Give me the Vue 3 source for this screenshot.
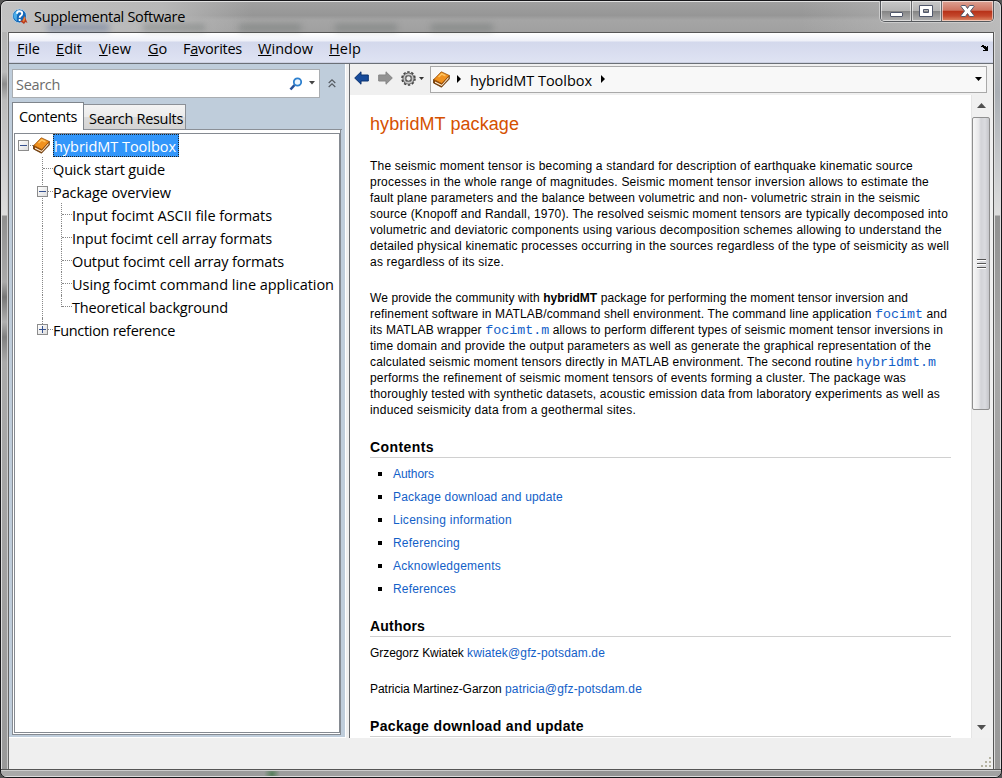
<script setup>
const menus = [
  { pre: '', key: 'F', post: 'ile', w: 23, gap: 16 },
  { pre: '', key: 'E', post: 'dit', w: 26, gap: 17 },
  { pre: '', key: 'V', post: 'iew', w: 32, gap: 17 },
  { pre: '', key: 'G', post: 'o', w: 19, gap: 16 },
  { pre: 'F', key: 'a', post: 'vorites', w: 59, gap: 16 },
  { pre: '', key: 'W', post: 'indow', w: 55, gap: 16 },
  { pre: '', key: 'H', post: 'elp', w: 32, gap: 0 },
]
const topics = [
  { text: 'Quick start guide', level: 1, w: 112 },
  { text: 'Package overview', level: 1, box: 'minus', w: 118 },
  { text: 'Input focimt ASCII file formats', level: 2, w: 200 },
  { text: 'Input focimt cell array formats', level: 2, w: 200 },
  { text: 'Output focimt cell array formats', level: 2, w: 212 },
  { text: 'Using focimt command line application', level: 2, w: 262 },
  { text: 'Theoretical background', level: 2, w: 156, end: true },
  { text: 'Function reference', level: 1, box: 'plus', w: 122, end: true },
]
const intro = [
  [543, 'The seismic moment tensor is becoming a standard for description of earthquake kinematic source'],
  [559, 'processes in the whole range of magnitudes. Seismic moment tensor inversion allows to estimate the'],
  [550, 'fault plane parameters and the balance between volumetric and non- volumetric strain in the seismic'],
  [578, 'source (Knopoff and Randall, 1970). The resolved seismic moment tensors are typically decomposed into'],
  [572, 'volumetric and deviatoric components using various decomposition schemes allowing to understand the'],
  [579, 'detailed physical kinematic processes occurring in the sources regardless of the type of seismicity as well'],
  [134, 'as regardless of its size.'],
]
const summary = [
  [539, [['', 'We provide the community with '], ['b', 'hybridMT'], ['', ' package for performing the moment tensor inversion and']]],
  [577, [['', 'refinement software in MATLAB/command shell environment. The command line application '], ['code', 'focimt'], ['', ' and']]],
  [573, [['', 'its MATLAB wrapper '], ['code', 'focimt.m'], ['', ' allows to perform different types of seismic moment tensor inversions in']]],
  [561, [['', 'time domain and provide the output parameters as well as generate the graphical representation of the']]],
  [566, [['', 'calculated seismic moment tensors directly in MATLAB environment. The second routine '], ['code', 'hybridmt.m']]],
  [536, [['', 'performs the refinement of seismic moment tensors of events forming a cluster. The package was']]],
  [570, [['', 'thoroughly tested with synthetic datasets, acoustic emission data from laboratory experiments as well as']]],
  [266, [['', 'induced seismicity data from a geothermal sites.']]],
]
const links = [
  ['Authors', 41], ['Package download and update', 170], ['Licensing information', 119],
  ['Referencing', 67], ['Acknowledgements', 108], ['References', 63],
]
// Spreads letters so that a line occupies the given width
const vFit = {
  mounted(el, { value }) {
    let n = el.textContent.length
    el.querySelectorAll('.code').forEach((c) => { n -= c.textContent.length })
    el.style.letterSpacing = (value - el.getBoundingClientRect().width) / n + 'px'
  },
}
</script>

<template>
  <div class="window">
    <header class="titlebar">
      <svg class="appicon" width="18" height="18" viewBox="0 0 18 18">
        <circle cx="7.500" cy="8" r="7" fill="#1468b8" stroke="#b8cfe0" />
        <path d="M1.500 7Q3 2 8 2Q4 6 5 13Q1.500 11 1.500 7" fill="#4caee9" />
        <path d="M5 5.700Q5 3.300 7.500 3.300Q10.200 3.300 10.200 5.600Q10.200 7.100 8.700 7.800Q7.700 8.300 7.700 9.700M7.700 11V13" fill="none" stroke="#fff" stroke-width="1.900" />
        <path d="M8 13.500L10.500 12L12.500 8L15.500 15L13.500 14L12 16L10 14.500Z" fill="#b83a1d" />
        <path d="M12.500 8L13.200 11L12 14L10.500 13Z" fill="#e8853b" />
      </svg>
      <span class="caption" v-fit="151">Supplemental Software</span>
      <div class="ghosts"><i></i><i></i><i></i><i></i><i></i></div>
      <div class="buttons">
        <span class="btn min"><svg width="30" height="20"><rect x="9.5" y="11.5" width="12" height="4" rx=".5" fill="#fff" stroke="#50576b" /></svg></span>
        <span class="btn max"><svg width="29" height="20"><path d="M7.500 4.500h13v11h-13zM11.500 8.500v3h5v-3z" fill="#fff" fill-rule="evenodd" stroke="#50576b" /></svg></span>
        <span class="btn close"><svg width="51" height="20"><path d="M19.500 4.500h4l2 3l2-3h4l.5 1l-3.500 4.500l3.500 4.500l-.5 1h-4l-2-3l-2 3h-4l-.5-1l3.500-4.500l-3.500-4.500z" fill="#fff" stroke="#50576b" /></svg></span>
      </div>
    </header>
    <div class="body">
      <div class="edge left"></div>
      <div class="client">
        <nav class="menubar">
          <span v-for="m in menus" :key="m.key" class="menu" :style="{ width: m.w + m.gap + 'px' }"><span class="ib" v-fit="m.w">{{ m.pre }}<u>{{ m.key }}</u>{{ m.post }}</span></span>
          <svg class="dock" width="8" height="7" viewBox="0 0 8 7" shape-rendering="crispEdges"><path d="M1 0h2v1h2v1h1v-1h1v5h-5v-1h2v-1h-1v-1h-1v-1h-2v-1h1z" fill="#000" /></svg>
        </nav>
        <div class="main">
          <aside class="side">
            <div class="searchrow">
              <div class="search">
                <span class="ib" v-fit="44">Search</span>
                <svg class="lens" width="14" height="14" viewBox="0 0 14 14"><path d="M1.500 12.500L5.500 8" stroke="#254f98" stroke-width="2.600" /><circle cx="8.500" cy="5" r="3.700" fill="#eef7ff" stroke="#2d80cf" stroke-width="1.800" /></svg>
                <svg class="caret" width="6" height="4" viewBox="0 0 6 4"><path d="M0 0H6L3 3.500Z" fill="#444" /></svg>
              </div>
              <svg class="chev" width="8" height="9" viewBox="0 0 8 9"><path d="M.7 4L4 .9L7.300 4M.7 8L4 4.900L7.300 8" fill="none" stroke="#555b62" stroke-width="1.200" /></svg>
            </div>
            <div class="tabs">
              <div class="tab on"><span class="ib" v-fit="58">Contents</span></div>
              <div class="tab off"><span class="ib" v-fit="94">Search Results</span></div>
              <div class="tabfill"></div>
            </div>
            <div class="panel">
              <div class="tree">
                <div class="row root">
                  <span class="box"></span><span class="dash"></span>
                  <svg class="book" width="17" height="17" viewBox="0 0 17 17"><path d="M.5 8.500V12L8.500 16.200L16.300 8V4.500Z" fill="#8a4507" stroke="#5e3409" stroke-width=".8" /><path d="M2 10.500L8.700 13.800L15.500 6V7.500L8.700 15L2 11.700Z" fill="#fff0d9" /><path d="M.8 8.500L8.300 .8L16.300 4.500L8.800 12.600Z" fill="#f0911f" stroke="#985008" stroke-width=".8" /><path d="M5.500 6L8.800 3L12.500 4.700" fill="none" stroke="#ffc35e" stroke-width="1.500" /></svg>
                  <span class="sel"><span class="ib" v-fit="122">hybridMT Toolbox</span></span>
                </div>
                <div v-for="t in topics" :key="t.text" class="row" :class="['lv' + t.level, { end: t.end }]">
                  <span class="guide"></span><span v-if="t.level === 2" class="guide two"></span>
                  <span v-if="t.box" class="box" :class="t.box"></span>
                  <span class="dash"></span>
                  <span class="ib label" v-fit="t.w">{{ t.text }}</span>
                </div>
              </div>
            </div>
          </aside>
          <section class="viewer">
            <div class="toolbar">
              <svg class="nav" width="15" height="14" viewBox="0 0 15 14"><path d="M.7 7L7 .8V4H14.300V10H7V13.200Z" fill="#174b9b" stroke="#0b3270" /></svg>
              <svg class="nav fwd" width="15" height="14" viewBox="0 0 15 14"><path d="M14.300 7L8 .8V4H.7V10H8V13.200Z" fill="#929292" stroke="#858585" /></svg>
              <svg class="nav gear" width="15" height="15" viewBox="0 0 15 15"><circle cx="7.500" cy="7.500" r="6.500" fill="none" stroke="#444" stroke-width="1.600" stroke-dasharray="2.400 1.684" /><circle cx="7.500" cy="7.500" r="4.600" fill="none" stroke="#4d4d4d" stroke-width="2.800" /><circle cx="7.500" cy="7.500" r="4.400" fill="none" stroke="#c8c8c8" stroke-width="1.600" /><circle cx="7.500" cy="7.500" r="2.700" fill="#eee" stroke="#555" stroke-width="1.100" /></svg>
              <svg class="nav tiny" width="5" height="3" viewBox="0 0 5 3"><path d="M0 0H5L2.500 3Z" fill="#333" /></svg>
              <div class="address">
                <svg class="book" width="17" height="17" viewBox="0 0 17 17"><path d="M.5 8.500V12L8.500 16.200L16.300 8V4.500Z" fill="#8a4507" stroke="#5e3409" stroke-width=".8" /><path d="M2 10.500L8.700 13.800L15.500 6V7.500L8.700 15L2 11.700Z" fill="#fff0d9" /><path d="M.8 8.500L8.300 .8L16.300 4.500L8.800 12.600Z" fill="#f0911f" stroke="#985008" stroke-width=".8" /><path d="M5.500 6L8.800 3L12.500 4.700" fill="none" stroke="#ffc35e" stroke-width="1.500" /></svg>
                <svg class="a1" width="4" height="8" viewBox="0 0 4 8"><path d="M0 0L4 4L0 8Z" /></svg>
                <span class="ib" v-fit="122">hybridMT Toolbox</span>
                <svg class="a2" width="4" height="8" viewBox="0 0 4 8"><path d="M0 0L4 4L0 8Z" /></svg>
                <svg class="drop" width="7" height="4" viewBox="0 0 7 4"><path d="M0 0H7L3.500 4Z" /></svg>
              </div>
            </div>
            <div class="docrow">
              <article class="doc">
                <h1><span class="ib" v-fit="149">hybridMT package</span></h1>
                <p><span v-for="l in intro" :key="l[1]" class="line"><span class="ib" v-fit="l[0]">{{ l[1] }}</span></span></p>
                <p><span v-for="(l, i) in summary" :key="i" class="line"><span class="ib" v-fit="l[0]"><span v-for="(s, j) in l[1]" :key="j" :class="s[0]">{{ s[1] }}</span></span></span></p>
                <h2><span class="ib" v-fit="64">Contents</span></h2>
                <ul><li v-for="l in links" :key="l[0]"><a class="ib" v-fit="l[1]">{{ l[0] }}</a></li></ul>
                <h2 class="after"><span class="ib" v-fit="55">Authors</span></h2>
                <p class="mail"><span class="ib" v-fit="97">Grzegorz Kwiatek </span><a class="ib" v-fit="138">kwiatek@gfz-potsdam.de</a></p>
                <p><span class="ib" v-fit="135">Patricia Martinez-Garzon </span><a class="ib" v-fit="137">patricia@gfz-potsdam.de</a></p>
                <h2><span class="ib" v-fit="214">Package download and update</span></h2>
              </article>
              <div class="scroll">
                <svg class="up" width="9" height="5" viewBox="0 0 9 5"><path d="M0 5L4.500 0L9 5Z" fill="#505050" /></svg>
                <div class="thumb"><i></i><i></i><i></i></div>
                <svg class="down" width="9" height="5" viewBox="0 0 9 5"><path d="M0 0H9L4.500 5Z" fill="#505050" /></svg>
              </div>
            </div>
          </section>
        </div>
        <footer class="status">
          <svg width="10" height="10" viewBox="0 0 10 10" fill="#b5b3a2"><path d="M8 0h2v2h-2zM4 4h2v2h-2zM8 4h2v2h-2zM0 8h2v2h-2zM4 8h2v2h-2zM8 8h2v2h-2z" /></svg>
        </footer>
      </div>
      <div class="edge right"></div>
    </div>
    <div class="bottom"></div>
  </div>
</template>

<style>
html, body { margin: 0; overflow: hidden; background: #555; }
</style>

<style scoped>
* { box-sizing: border-box; }
svg { display: block; flex: none; }
.window { width: 1002px; height: 778px; display: flex; flex-direction: column; font: 14.5px/20px "Open Sans", "Noto Sans", sans-serif; color: #000; background: #a5a5a5; border: 1px solid #17171a; border-radius: 7px; overflow: hidden; box-shadow: inset 0 0 0 1px #d5d5d5; }
.ib { display: inline-block; white-space: pre; flex: none; }
.titlebar { height: 31px; flex: none; display: flex; align-items: flex-start; position: relative; border-top: 1px solid #e2e2e2; border-left: 1px solid #d8d8d8; border-right: 1px solid #d8d8d8; border-radius: 6px 6px 0 0; background: linear-gradient(90deg, rgba(196,196,196,.95) 0, rgba(186,186,186,.9) 160px, rgba(150,150,150,0) 250px), linear-gradient(90deg, transparent 80%, rgba(195,195,195,.75) 100%), linear-gradient(#a0a0a0, #969696 45%, #a5a5a5 60%, #a0a0a0); }
.appicon { margin: 6px 0 0 10px; }
.caption { margin: 5px 0 0 4px; white-space: pre; position: relative; z-index: 1; }
.ghosts { position: absolute; left: 45px; top: 22px; display: flex; gap: 34px; filter: blur(3px); }
.ghosts i { width: 62px; height: 7px; background: rgba(85,92,90,.32); }
.ghosts i:first-child { background: rgba(65,90,140,.4); }
.buttons { position: absolute; right: 6px; top: -1px; display: flex; height: 21px; border: 1px solid #55585c; border-top: 0; border-radius: 0 0 5px 5px; overflow: hidden; box-shadow: 0 0 0 1px #ccc; }
.btn { height: 20px; box-shadow: inset 0 0 0 1px rgba(255,255,255,.55); background: linear-gradient(#c8c8c8, #b4b4b4 48%, #858585 52%, #b1b1b1); }
.min { width: 31px; border-right: 1px solid #65676a; }
.max { width: 30px; border-right: 1px solid #65676a; }
.close { width: 51px; background: linear-gradient(#dda294, #ce7461 46%, #b83219 52%, #c4472c 75%, #de8c69); }
.body { flex: 1; display: flex; min-height: 0; }
.edge { flex: none; }
.left { width: 8px; border-left: 1px solid #ddd; border-right: 1px solid #666; background: linear-gradient(#b5b5b5 0, #bbb 40px, #8d8d8d 52px, #bbb 68px, #ddd 183px, #8f8f8f 184px, #aaa 250px, #777 265px, #b0b0b0 290px, #808080 305px, #aaa 330px, #999); box-shadow: inset -1px 0 #ccc; }
.right { width: 8px; border-left: 1px solid #555; border-right: 1px solid #ddd; background: linear-gradient(#b9b9b9 0, #aaafb5 60px, #ddd 183px, #929292 184px, #a8a8a8 320px, #999); box-shadow: inset 1px 0 #ddd; }
.client { flex: 1; min-width: 0; display: flex; flex-direction: column; background: #f0f0f0; border-top: 1px solid #555; }
.menubar { height: 31px; flex: none; display: flex; align-items: flex-start; padding: 6px 4px 0 8px; border-bottom: 1px solid #6b7077; background: linear-gradient(#fff 0, #eef0f8 8px, #d3d8ec 9px, #dfe3f3 29px, #b8bdd0 30px); }
.menu { flex: none; }
.menu u { text-underline-offset: 1px; text-decoration-thickness: 1px; }
.dock { margin: 6px 0 0 auto; }
.main { height: 674px; flex: none; display: flex; }
.side { width: 337px; flex: none; background: #bfcddb; border-right: 1px solid #fff; border-bottom: 1px solid #fff; padding: 5px 3px 0; }
.searchrow { display: flex; align-items: center; height: 29px; }
.search { width: 308px; height: 29px; background: #fff; border: 1px solid #a9adb1; display: flex; align-items: center; padding: 1px 4px 0 3px; color: #6c6c6c; }
.search .ib { padding-top: 2px; }
.lens { margin: 0 6px 0 auto; }
.caret { margin-top: -3px; }
.chev { margin-left: 8px; }
.tabs { display: flex; align-items: flex-end; height: 32px; padding-top: 4px; }
.tab { flex: none; white-space: nowrap; }
.on { width: 72px; height: 28px; background: #fff; border: 1px solid #7f858c; border-bottom: 0; padding: 4px 0 0 6px; }
.off { width: 102px; height: 26px; border: 1px solid #8b9097; border-left: 0; background: linear-gradient(#f3f3f3, #ebebeb 50%, #dcdcdc 52%, #d4d4d4); padding: 4px 0 0 5px; }
.tabfill { width: 156px; flex: none; height: 1px; background: #8b9097; }
.panel { width: 329px; height: 605px; background: #fff; border: 1px solid #858a91; border-top: 0; padding: 3px 0 2px 1px; }
.tree { width: 326px; height: 600px; border: 1px solid #858a91; }
.row { height: 23px; display: flex; align-items: center; position: relative; white-space: pre; }
.label { padding-top: 2px; }
.root { padding-left: 3px; }
.root .dash { width: 3px; margin-left: 1px; }
.root .book { margin: 0 3px 0 0; }
.sel { height: 23px; width: 126px; flex: none; background: #3296fa; border: 1px dotted #222; color: #fff; padding: 2px 0 0 0; line-height: 20px; }
.lv1 { padding-left: 38px; }
.lv2 { padding-left: 57px; }
.guide { position: absolute; left: 27px; top: 0; height: 23px; border-left: 1px dotted #888; }
.guide.two { left: 46px; }
.lv1 > .dash { position: absolute; left: 28px; width: 10px; }
.lv2 > .dash { position: absolute; left: 47px; width: 10px; }
.dash { border-top: 1px dotted #888; height: 1px; }
.end .two, .lv1.end .guide { height: 12px; }
.box { width: 11px; height: 11px; border: 1px solid #8c8c8c; background: linear-gradient(#35508e, #35508e) center / 7px 1px no-repeat, linear-gradient(135deg, #fff, #ddd); flex: none; }
.lv1 .box { position: absolute; left: 22px; top: 6px; z-index: 1; }
.plus { background: linear-gradient(#35508e, #35508e) center / 7px 1px no-repeat, linear-gradient(#35508e, #35508e) center / 1px 7px no-repeat, linear-gradient(135deg, #fff, #ddd); }
.viewer { flex: 1; min-width: 0; margin-left: 3px; border-left: 1px solid #6b6e72; display: flex; flex-direction: column; }
.toolbar { height: 31px; flex: none; display: flex; align-items: center; padding: 0 0 1px 4px; }
.nav { margin-top: -2px; }
.fwd { margin-left: 9px; }
.gear { margin-left: 8px; }
.tiny { margin-left: 3px; }
.address { width: 557px; height: 27px; margin-left: 6px; border: 1px solid #a9a9a9; background: #f8f8f8; display: flex; align-items: center; flex: none; }
.address .book { margin: 0 7px 0 2px; }
.address .ib { margin: 0 9px; padding-top: 4px; }
.drop { margin: 0 4px 0 auto; }
.docrow { flex: 1; min-height: 0; display: flex; padding-right: 3px; }
.doc { flex: 1; min-width: 0; background: #fff; overflow: hidden; padding: 17px 20px 0 20px; font: 12px/16px "Liberation Sans", Arial, sans-serif; }
h1 { margin: 0 0 22px; font-size: 18px; line-height: 24px; font-weight: 400; color: #d55000; height: 24px; }
p { margin: 0 0 20px; min-height: 16px; white-space: nowrap; }
.line { display: block; height: 16px; }
.b { font-weight: 700; letter-spacing: 0; }
.code { font: 13.333px/14px "Liberation Mono", "Courier New", monospace; color: #1260c8; letter-spacing: 0; }
a { color: #1260c8; }
h2 { height: 21px; margin: 18px 0 0; border-bottom: 1px solid #d0d0d0; font-size: 14px; line-height: 20px; white-space: nowrap; }
p + h2 { margin-top: -1px; }
ul { margin: 5px 0 0; padding: 0; list-style: none; }
li { height: 23px; line-height: 23px; display: flex; align-items: center; }
li::before { content: ""; width: 4px; height: 4px; background: #000; margin: 0 11px 1px 8px; }
h2.after { margin-top: 15px; }
.mail { margin-top: 8px; }
.scroll { width: 19px; flex: none; background: #f0f0f0; border-left: 1px solid #e5e5e5; display: flex; flex-direction: column; align-items: center; padding: 8px 0 8px; }
.thumb { width: 18px; height: 293px; margin-top: 9px; flex: none; border: 1px solid #8f8f8f; border-radius: 2px; background: linear-gradient(90deg, #f7f7f7, #e8e8ea 35%, #d2d3d7 50%, #dadbdf 75%, #c5c6ca); display: flex; flex-direction: column; align-items: center; justify-content: center; gap: 2px; }
.thumb i { width: 9px; height: 2px; background: linear-gradient(#555 50%, #fff 50%); }
.down { margin-top: auto; }
.status { flex: 1; background: #efefef; display: flex; justify-content: flex-end; align-items: flex-end; padding: 0 2px 2px 0; }
.bottom { height: 8px; flex: none; border-top: 1px solid #555; border-bottom: 1px solid #ddd; background: radial-gradient(circle at 271px 4px, #567e5b 0, transparent 8px), linear-gradient(90deg, #aaa, #999 20%, #a2a2a2 40%, #929292 60%, #a2a2a2); box-shadow: inset 0 1px #ccc; }
</style>
